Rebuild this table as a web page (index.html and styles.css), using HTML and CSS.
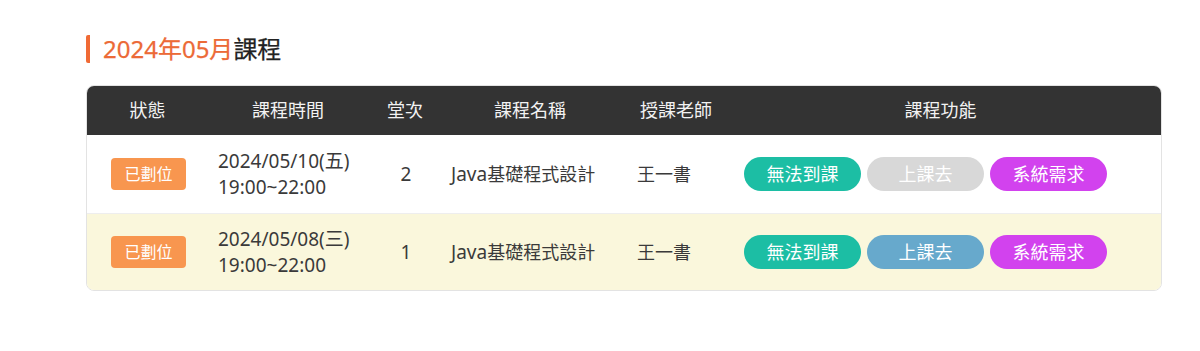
FILE: index.html
```html
<!DOCTYPE html>
<html lang="zh-Hant">
<head>
<meta charset="utf-8">
<title>2024年05月課程</title>
<link rel="stylesheet" href="styles.css">
</head>
<body>
<section class="page">
  <h2 class="title"><span class="accent">2024年05月</span>課程</h2>
  <div class="table">
    <div class="row head">
      <div class="cell c-center">狀態</div>
      <div class="cell c-center">課程時間</div>
      <div class="cell c-center">堂次</div>
      <div class="cell c-center">課程名稱</div>
      <div class="cell c-center">授課老師</div>
      <div class="cell c-center c-func">課程功能</div>
    </div>
    <div class="row">
      <div class="cell c-center"><span class="badge">已劃位</span></div>
      <div class="cell c-time">2024/05/10(五)<br>19:00~22:00</div>
      <div class="cell c-center c-num">2</div>
      <div class="cell c-name"><span class="latin">Java</span>基礎程式設計</div>
      <div class="cell c-teacher">王一書</div>
      <div class="cell c-actions">
        <span class="btn btn-teal">無法到課</span>
        <span class="btn btn-grey">上課去</span>
        <span class="btn btn-purple">系統需求</span>
      </div>
    </div>
    <div class="row alt">
      <div class="cell c-center"><span class="badge">已劃位</span></div>
      <div class="cell c-time">2024/05/08(三)<br>19:00~22:00</div>
      <div class="cell c-center c-num">1</div>
      <div class="cell c-name"><span class="latin">Java</span>基礎程式設計</div>
      <div class="cell c-teacher">王一書</div>
      <div class="cell c-actions">
        <span class="btn btn-teal">無法到課</span>
        <span class="btn btn-blue">上課去</span>
        <span class="btn btn-purple">系統需求</span>
      </div>
    </div>
  </div>
</section>
</body>
</html>
```

FILE: styles.css
```css
* { box-sizing: border-box; }
html, body { margin: 0; padding: 0; background: #fff; }
body {
  font-family: "Noto Sans", "Noto Sans CJK TC", sans-serif;
  color: #333;
}
.page {
  padding: 35px 38px 0 86px;
}
.title {
  margin: 0;
  height: 28px;
  display: flex;
  align-items: center;
  font-size: 24px;
  font-weight: 400;
  color: #222;
  -webkit-text-stroke: 0.25px currentColor;
  border-left: 4px solid #f06a35;
  border-radius: 2px;
  padding-left: 13px;
  line-height: 28px;
}
.title .accent { color: #ec6a37; }
.table {
  margin-top: 22px;
  width: 1076px;
  border: 1px solid #e3e3e3;
  border-radius: 8px;
  overflow: hidden;
}
.row {
  display: grid;
  grid-template-columns: 123px 158px 76px 174px 118px 1fr;
  height: 78px;
  align-items: center;
  font-size: 18px;
  color: #3a3a3a;
  background: #fff;
}
.row.alt {
  background: #faf7dc;
  border-top: 1px solid #eeeeee;
  height: 77px;
}
.row.head {
  height: 50px;
  background: #333;
  color: #f2f2f2;
  font-size: 18px;
  margin: -1px -1px 0;
}
.cell { line-height: 26px; }
.c-center { text-align: center; }
.c-func { padding-right: 16px; }
.c-time { padding-left: 8px; font-size: 19px; }
.c-num { font-size: 19px; }
.c-name { padding-left: 7px; }
.c-name .latin { font-size: 19px; }
.c-teacher { padding-left: 19px; }
.c-actions {
  display: flex;
  gap: 6px;
  padding-left: 8px;
}
.badge {
  display: inline-block;
  width: 75px;
  height: 32px;
  line-height: 32px;
  background: #f8964f;
  color: #fff;
  font-size: 16px;
  border-radius: 4px;
  text-align: center;
}
.btn {
  display: inline-block;
  width: 117px;
  height: 34px;
  line-height: 34px;
  border-radius: 17px;
  color: #fff;
  font-size: 18px;
  text-align: center;
}
.btn-teal { background: #1cbea4; }
.btn-grey { background: #d8d8d8; }
.btn-blue { background: #67a9cc; }
.btn-purple { background: #d242ee; }
```
